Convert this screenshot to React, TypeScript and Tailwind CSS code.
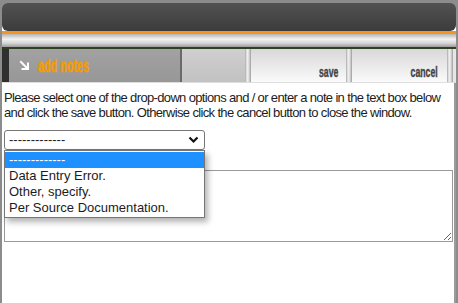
import React from 'react';

const heavy = { fontFamily: "'Liberation Sans', Arial, sans-serif" };

const Separator = () => (
  <div className="w-[6px] h-full bg-[linear-gradient(to_right,#a8a8a8,#f2f2f2_35%,#dcdcdc_65%,#9c9c9c)]" />
);

const options = ['-------------', 'Data Entry Error.', 'Other, specify.', 'Per Source Documentation.'];

export default function App() {
  return (
    <div
      className="w-[458px] h-[303px] bg-[#8c8c8c] pl-[2px] pr-[2px] pt-[3px] flex flex-col overflow-hidden"
      style={{ fontFamily: "'Liberation Sans', Arial, sans-serif" }}
    >
      {/* header */}
      <div className="bg-[linear-gradient(to_bottom,#8c8c8c_50%,#ffffff_50%)]">
        <div className="h-[28px] rounded-[6px] bg-[linear-gradient(to_bottom,#525252,#464646_55%,#3b3b3b)]" />
      </div>
      <div className="h-[3px] bg-[#f7941d]" />
      <div className="h-[13px] bg-[linear-gradient(to_bottom,#b4b4b4,#f2f2f2_40%,#d6d6d6_70%,#9c9c9c)]" />
      <div className="h-[2px] bg-[#2f3f22]" />

      {/* tab row */}
      <div className="h-[34px] flex border-b border-[#dedede] bg-white">
        <div className="w-[7px] bg-[#2f2f2f]" />
        <div className="w-[173px] bg-[linear-gradient(to_bottom,#a2a2a2,#979797)] border-r-2 border-[#6a6a6a] flex items-center pl-[10px] gap-[8px]">
          <svg width="11" height="11" viewBox="0 0 11 11" fill="none" stroke="#ffffff" strokeWidth="2" strokeLinecap="square">
            <path d="M2 2 L8.5 8.5" />
            <path d="M9 3.5 V9 H3.5" />
          </svg>
          <span
            className="inline-block origin-left scale-x-[0.6] text-[#f59c00] text-[18px] font-bold leading-none whitespace-nowrap [-webkit-text-stroke:0.6px_#f59c00]"
            style={heavy}
          >
            add notes
          </span>
        </div>
        <div className="w-[63px] bg-[linear-gradient(to_bottom,#cfcfcf,#c2c2c2)]" />
        <Separator />
        <div className="w-[95px] bg-[linear-gradient(to_bottom,#d8d8d8,#fafafa)] flex items-end justify-end pr-[8px] pb-[3px]">
          <span className="inline-block origin-right scale-x-[0.58] text-[#444] text-[15px] font-bold leading-none [-webkit-text-stroke:0.4px_#444]" style={heavy}>
            save
          </span>
        </div>
        <Separator />
        <div className="w-[95px] bg-[linear-gradient(to_bottom,#d8d8d8,#fafafa)] flex items-end justify-end pr-[9px] pb-[3px]">
          <span className="inline-block origin-right scale-x-[0.58] text-[#444] text-[15px] font-bold leading-none [-webkit-text-stroke:0.4px_#444]" style={heavy}>
            cancel
          </span>
        </div>
        <Separator />
        <div className="flex-1 bg-[#e6e6e6]" />
      </div>

      {/* body */}
      <div className="flex-1 bg-white border-r-2 border-[#9a9a9a] px-[2px] pt-[7px] relative">
        <p className="text-[13px] leading-[15px] tracking-[-0.65px] text-[#1c1c1c]">
          Please select one of the drop-down options and / or enter a note in the text box below and click the save button. Otherwise click the cancel button to close the window.
        </p>

        <div className="relative mt-[10px] w-[201px]">
          <div className="h-[20px] border border-[#767676] rounded-[3px] flex items-center justify-between pl-[4px] pr-[5px] text-[13px] text-[#1c1c1c]">
            <span>-------------</span>
            <svg width="11" height="8" viewBox="0 0 11 8" fill="none" stroke="#111" strokeWidth="2.2">
              <path d="M1.5 1.5 L5.5 5.5 L9.5 1.5" />
            </svg>
          </div>
          <div className="absolute left-0 top-[20px] w-[201px] z-10 bg-white border border-[#767676] py-[1px] shadow-[3px_4px_6px_rgba(0,0,0,0.3)]">
            {options.map((o, i) => (
              <div
                key={o}
                className={`h-[16px] pl-[4px] text-[13px] leading-[16px] ${i === 0 ? 'bg-[#1e90ff] text-white' : 'text-[#1c1c1c]'}`}
              >
                {o}
              </div>
            ))}
          </div>
        </div>

        <textarea
          className="block mt-[20px] w-[449px] h-[72px] border border-[#9a9a9a] bg-white"
          defaultValue=""
        />
      </div>
    </div>
  );
}
